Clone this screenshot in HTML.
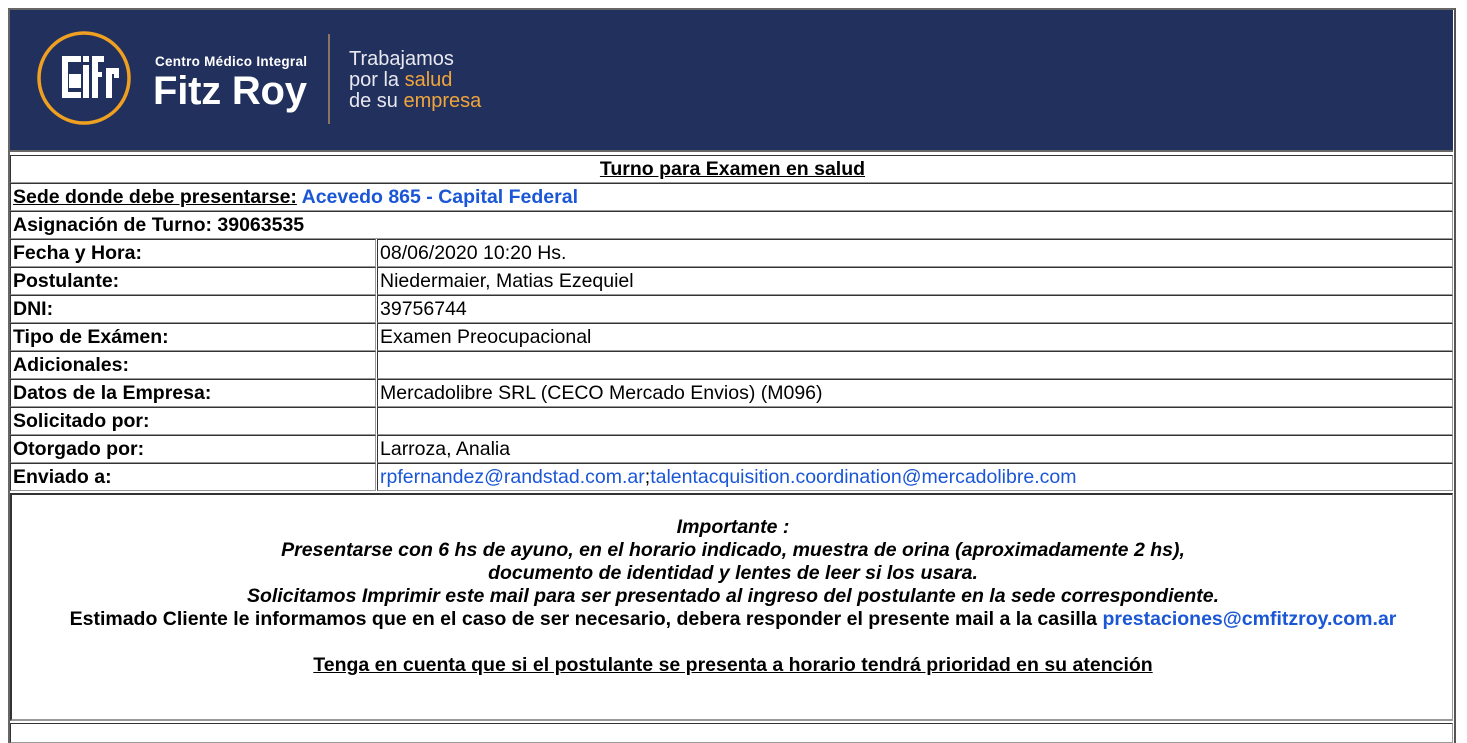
<!DOCTYPE html>
<html><head><meta charset="utf-8"><style>
body{margin:0;background:#fff;width:1467px;height:735px;overflow:hidden;font-family:"Liberation Sans",Arial,sans-serif;position:relative}
.c{position:absolute;box-sizing:border-box;border:1px solid;border-color:#333 #999 #999 #333;font-size:19.5px;line-height:26px;padding-left:2px;color:#000;white-space:nowrap}
.b{font-weight:bold}
a{color:#1a56d6;text-decoration:none}
.u{text-decoration:underline}
</style></head><body>
<div style="position:absolute;left:8px;top:8px;width:1448px;height:735px;box-sizing:border-box;border-style:solid;border-width:2px 2px 0 2px;border-color:#666 #555 #555 #666"></div>
<div style="position:absolute;left:10px;top:10px;width:1443px;height:142px;background:#22305e;border-bottom:2px solid #666;box-sizing:border-box">
<svg width="500" height="142" viewBox="0 0 500 142" style="position:absolute;left:0;top:0">
<circle cx="74" cy="68" r="45" fill="none" stroke="#f0a020" stroke-width="3.5"/>
<g fill="#fff">
<rect x="52" y="46" width="19" height="6"/><rect x="52" y="46" width="6" height="42"/><rect x="52" y="82" width="19" height="6"/>
<rect x="59" y="64" width="12" height="14"/>
<rect x="73" y="46" width="6" height="6"/><rect x="73" y="55" width="6" height="33"/>
<rect x="82" y="46" width="12" height="6"/><rect x="82" y="46" width="6" height="42"/><rect x="82" y="62" width="10" height="5"/>
<rect x="96" y="58" width="6" height="30"/><rect x="96" y="58" width="13" height="6"/><rect x="104" y="58" width="5" height="10"/>
</g>
<text x="145" y="56" fill="#fff" font-family="Liberation Sans" font-weight="bold" font-size="13.5" textLength="152">Centro Médico Integral</text>
<text x="143" y="94" fill="#fff" font-family="Liberation Sans" font-weight="bold" font-size="40" textLength="154">Fitz Roy</text>
<rect x="318" y="24" width="2" height="90" fill="#8a7565"/>
<text x="339" y="55" fill="#e8e8ef" font-family="Liberation Sans" font-size="20">Trabajamos</text>
<text x="339" y="76" fill="#e8e8ef" font-family="Liberation Sans" font-size="20">por la <tspan fill="#f0a53a">salud</tspan></text>
<text x="339" y="97" fill="#e8e8ef" font-family="Liberation Sans" font-size="20">de su <tspan fill="#f0a53a">empresa</tspan></text>
</svg></div>
<div class="c b" style="left:10px;top:155px;width:1443px;height:28px;text-align:center"><span class="u">Turno para Examen en salud</span></div>
<div class="c b" style="left:10px;top:183px;width:1443px;height:28px"><span class="u">Sede donde debe presentarse:</span> <a>Acevedo 865 - Capital Federal</a></div>
<div class="c b" style="left:10px;top:211px;width:1443px;height:28px">Asignación de Turno: 39063535</div>
<div class="c b" style="left:10px;top:239px;width:366px;height:28px">Fecha y Hora:</div><div class="c" style="left:377px;top:239px;width:1076px;height:28px">08/06/2020 10:20 Hs.</div>
<div class="c b" style="left:10px;top:267px;width:366px;height:28px">Postulante:</div><div class="c" style="left:377px;top:267px;width:1076px;height:28px">Niedermaier, Matias Ezequiel</div>
<div class="c b" style="left:10px;top:295px;width:366px;height:28px">DNI:</div><div class="c" style="left:377px;top:295px;width:1076px;height:28px">39756744</div>
<div class="c b" style="left:10px;top:323px;width:366px;height:28px">Tipo de Exámen:</div><div class="c" style="left:377px;top:323px;width:1076px;height:28px">Examen Preocupacional</div>
<div class="c b" style="left:10px;top:351px;width:366px;height:28px">Adicionales:</div><div class="c" style="left:377px;top:351px;width:1076px;height:28px"></div>
<div class="c b" style="left:10px;top:379px;width:366px;height:28px">Datos de la Empresa:</div><div class="c" style="left:377px;top:379px;width:1076px;height:28px">Mercadolibre SRL (CECO Mercado Envios) (M096)</div>
<div class="c b" style="left:10px;top:407px;width:366px;height:28px">Solicitado por:</div><div class="c" style="left:377px;top:407px;width:1076px;height:28px"></div>
<div class="c b" style="left:10px;top:435px;width:366px;height:28px">Otorgado por:</div><div class="c" style="left:377px;top:435px;width:1076px;height:28px">Larroza, Analia</div>
<div class="c b" style="left:10px;top:463px;width:366px;height:28px">Enviado a:</div><div class="c" style="left:377px;top:463px;width:1076px;height:28px"><a>rpfernandez@randstad.com.ar</a>;<a>talentacquisition.coordination@mercadolibre.com</a></div>
<div class="c b" style="left:10px;top:493px;width:1443px;height:228px;text-align:center;line-height:23px;padding-top:21px;white-space:normal;border-width:2px 1px 2px 2px">
<i>Importante :<br>Presentarse con 6 hs de ayuno, en el horario indicado, muestra de orina (aproximadamente 2 hs),<br>documento de identidad y lentes de leer si los usara.<br>Solicitamos Imprimir este mail para ser presentado al ingreso del postulante en la sede correspondiente.</i><br>
Estimado Cliente le informamos que en el caso de ser necesario, debera responder el presente mail a la casilla <a>prestaciones@cmfitzroy.com.ar</a><br><br><span class="u">Tenga en cuenta que si el postulante se presenta a horario tendrá prioridad en su atención</span></div>
<div class="c" style="left:10px;top:723px;width:1443px;height:20px"></div>
</body></html>
